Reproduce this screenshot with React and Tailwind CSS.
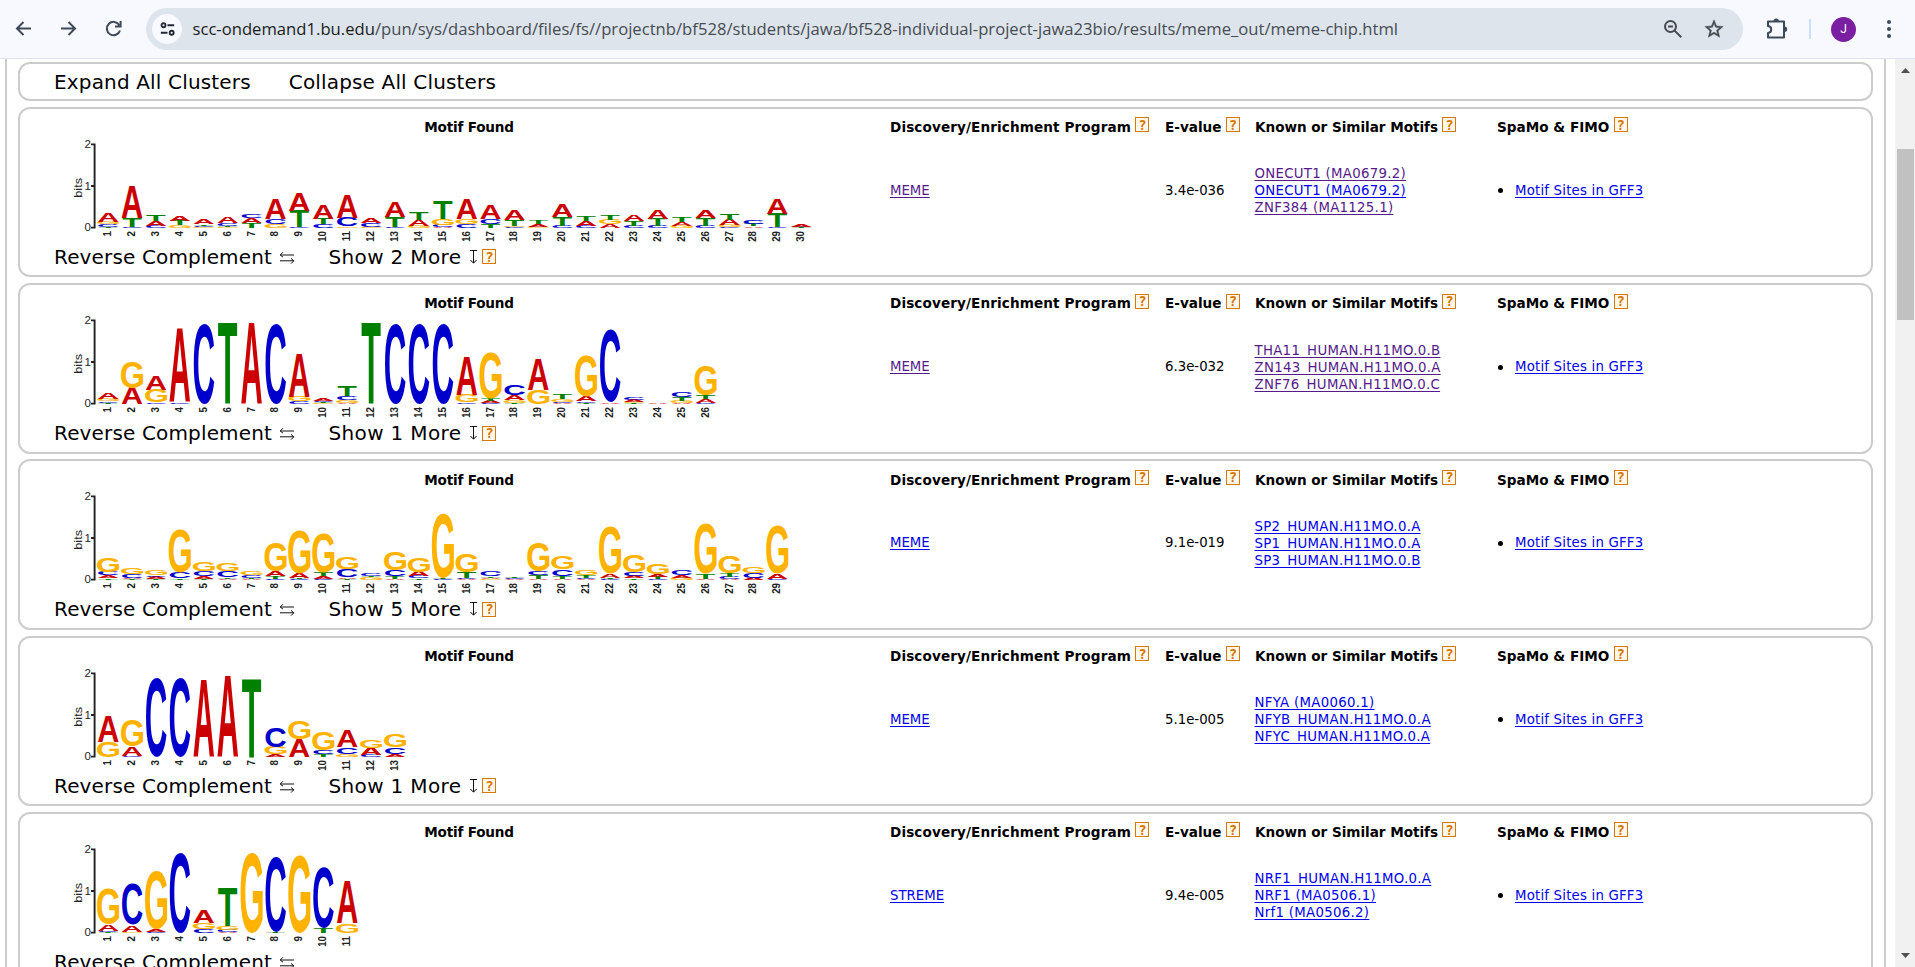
import React from "react";

const VERDANA = "font-['DejaVu_Sans',sans-serif]";

/* Ink box of each capital at font-size 100 and its drawn width in the logo. */
const GLYPHS = {
  A: { x: 0.1, w: 72, top: 68.8, bottom: 0, draw: 22, color: "#cc0000" },
  C: { x: 4.4, w: 64, top: 69.8, bottom: 1, draw: 20, color: "#0000cc" },
  G: { x: 4.2, w: 67.5, top: 69.8, bottom: 1, draw: 22, color: "#ffb300" },
  T: { x: 2.1, w: 57, top: 68.8, bottom: 0, draw: 18.4, color: "#008000" },
};

const BASE = 89.9;
const PITCH = 23.9;

/* Each column lists its letters from top to bottom with heights in thirds of a pixel. */
function Logo({ columns }) {
  const cols = columns.trim().split(/\s+/);
  return (
    <svg width="760" height="109" viewBox="0 0 760 109" className="block shrink-0 overflow-visible">
      <g fill="#222" fontFamily="Liberation Sans, sans-serif" fontSize="11.5">
        <text x="16.8" y="10.2" textAnchor="end">2</text>
        <text x="16.8" y="51.6" textAnchor="end">1</text>
        <text x="16.8" y="93" textAnchor="end">0</text>
        <text transform="translate(8 59.8) rotate(-90)" fontSize="10.5" textLength="20" lengthAdjust="spacingAndGlyphs" y="0">bits</text>
      </g>
      <path d="M17 6.4H21.2M17 48H21.2M17 89.6H21.2M20.6 5.5V90.5" stroke="#222" strokeWidth="1.9" fill="none" />
      {cols.map((col, i) => {
        const cx = 34.2 + i * PITCH;
        const items = col.match(/[ACGT]\d+/g) || [];
        let y = BASE;
        const letters = [...items].reverse().map((it, k) => {
          const g = GLYPHS[it[0]];
          const h = Number(it.slice(1)) / 3;
          const sx = g.draw / g.w;
          const sy = h / (g.top + g.bottom);
          const bottom = y;
          y -= h;
          return (
            <text
              key={k}
              transform={`matrix(${sx} 0 0 ${sy} ${cx - g.draw / 2 - g.x * sx} ${bottom - g.bottom * sy})`}
              fill={g.color}
              fontFamily="Liberation Sans, sans-serif"
              fontWeight="700"
              fontSize="100"
            >
              {it[0]}
            </text>
          );
        });
        return (
          <g key={i}>
            {letters}
            <text
              transform={`translate(${cx + 2.9} 93) rotate(-90) scale(0.9 1)`}
              textAnchor="end"
              fontFamily="Liberation Sans, sans-serif"
              fontWeight="700"
              fontSize="10.8"
              fill="#222"
            >
              {i + 1}
            </text>
          </g>
        );
      })}
    </svg>
  );
}

function Help() {
  return (
    <span className="inline-flex h-[15px] w-[14px] shrink-0 items-center justify-center border border-[#d97700] bg-[#fff8ee] font-['DejaVu_Sans_Mono',monospace] text-[14px] leading-none font-bold text-[#d97700]">
      ?
    </span>
  );
}

function Head({ children, className = "" }) {
  return (
    <div className={`flex h-[29px] items-center gap-[4.5px] pt-[8px] text-[13.6px] font-bold whitespace-nowrap ${className}`}>
      <span>{children}</span>
      <span className="-mt-[5px] flex tracking-normal"><Help /></span>
    </div>
  );
}

function SwapIcon() {
  return (
    <svg width="16" height="14" viewBox="0 0 16 14" className="mt-[2px] ml-[6.5px]" fill="none" stroke="#111" strokeWidth="1">
      <path d="M15 4H1.2M4 1.2L1.2 4L4 6.2M1 9.8H14.8M12 7.4L14.8 9.8L12 12.6" />
    </svg>
  );
}

function DownBarIcon() {
  return (
    <svg width="9" height="16" viewBox="0 0 9 16" className="mr-[4px] ml-[8px]" fill="none" stroke="#111" strokeWidth="1">
      <path d="M1 1.5H8M4.5 1.5V14M1.5 11L4.5 14.2L7.5 11" />
    </svg>
  );
}

const CLUSTERS = [
  {
    program: "MEME", seen: true, evalue: "3.4e-036", more: 2,
    motifs: [["ONECUT1 (MA0679.2)", true], ["ONECUT1 (MA0679.2)", false], ["ZNF384 (MA1125.1)", true]],
    logo: "A27G7C7T4 A95T27C4 T18A13C7 A16T13G8 A14T4C5G2 A20C9T4G3 C12A15T14 A59C16G12 A52T48C2 A40T17C11 A70C26G5 A14C12G4 A44T31C3 T24A18G7 T52G18C6A3 A62G14C12 A43C16T12 A31T18G4C3 T10A9G4 A36T25C7 T16A15C7 T16G14A11 A20T15C6 A28T21C7 T14A11G6 A24T22C7 T17A17G6C2 C11T8A5 A45T40C3 A7C2T2",
  },
  {
    program: "MEME", seen: true, evalue: "6.3e-032", more: 1,
    motifs: [["THA11_HUMAN.H11MO.0.B", true], ["ZN143_HUMAN.H11MO.0.A", true], ["ZNF76_HUMAN.H11MO.0.C", true]],
    logo: "A18G7C5T3 G77A48 A42G38C5 A217C5 C241 T241 A241 C241 A131G15C7 A8C3T3G3 T32C11G9A3 T241 C241 C241 C241 A116G24C4 G136T8A6C3 C31A15G8T3 A91G41 T16G8C3A4 G123A13C4T4 C216A5 C9A6G3T2 A2 C15T12G6A3 G90T12A10C4",
  },
  {
    program: "MEME", seen: false, evalue: "9.1e-019", more: 5,
    motifs: [["SP2_HUMAN.H11MO.0.A", false], ["SP1_HUMAN.H11MO.0.A", false], ["SP3_HUMAN.H11MO.0.B", false]],
    logo: "G43C10A9T5 G18C10A4T2 G15C5A6T4 G129C18T4 G29C15A8T4 G22C18T4A3 G11C8T3A3 G87A14T9C2 G128A13T4C3 G118T11A8C3 G34C25A5T3 C9T5G8 G55C18T9A3 G41A13C6T5 G192T4C3 G53T18C3A3 C14T5A3G3 T5C3A3 G86C12T11A3 G38C21T7A3 G15T7C3A3 G142A11T4C3 G50C12A7T5 G30A8T6C4 C14A9G6 G150T14A4 G51T10C6A3 G19C14A6 G144A14C4",
  },
  {
    program: "MEME", seen: false, evalue: "5.1e-005", more: 1,
    motifs: [["NFYA (MA0060.1)", false], ["NFYB_HUMAN.H11MO.0.A", false], ["NFYC_HUMAN.H11MO.0.A", false]],
    logo: "A75G46 G79A27C4 C235 C235 A229 A241 T235 C60G22A8 G56A52 G54C12T9 A51C20G9 G22A21C6 G37C20A9",
  },
  {
    program: "STREME", seen: false, evalue: "9.4e-005", more: 0,
    motifs: [["NRF1_HUMAN.H11MO.0.A", false], ["NRF1 (MA0506.1)", false], ["Nrf1 (MA0506.2)", false]],
    logo: "G105A19C3T2 C123A20G4 G175A9C4 C241 A36G19C12 T116G10C6A4 G241 C223T3 G233 C183T14 A126G29",
  },
];

function Link({ seen, children }) {
  return (
    <a className={`underline underline-offset-[1.5px] ${seen ? "text-[#551a8b]" : "text-[#0000ee]"}`}>{children}</a>
  );
}

function Cluster({ c }) {
  return (
    <section className="grid h-[170.5px] shrink-0 grid-cols-[870px_275px_90px_242px_1fr] rounded-[12px] border-2 border-[#cccccc]">
      <div className="flex min-w-0 flex-col pl-[34px]">
        <div className="flex h-[29px] items-center justify-center pt-[8px] pr-[6px] text-[13.6px] font-bold tracking-[-0.2px]">
          Motif Found
        </div>
        <div className="pl-[20px]">
          <Logo columns={c.logo} />
        </div>
        <div className="-mt-[2px] flex h-[24px] items-center text-[20px] tracking-[0.15px] whitespace-nowrap">
          <span>Reverse Complement</span>
          <SwapIcon />
          {c.more > 0 && (
            <>
              <span className="ml-[34px] tracking-[0.35px]">Show {c.more} More</span>
              <DownBarIcon />
              <span className="flex tracking-normal"><Help /></span>
            </>
          )}
        </div>
      </div>
      <div>
        <Head className="tracking-[0.1px]">Discovery/Enrichment Program</Head>
        <div className="flex h-[106px] items-center text-[13.3px]"><Link seen={c.seen}>{c.program}</Link></div>
      </div>
      <div>
        <Head>E-value</Head>
        <div className="flex h-[106px] items-center text-[13.3px]">{c.evalue}</div>
      </div>
      <div>
        <Head className="tracking-[-0.04px]">Known or Similar Motifs</Head>
        <div className="-ml-[0.5px] flex h-[106px] flex-col justify-center text-[13.3px] leading-[17px] tracking-[0.3px]">
          {c.motifs.map(([name, seen], i) => (
            <div key={i}><Link seen={seen}>{name}</Link></div>
          ))}
        </div>
      </div>
      <div>
        <Head>SpaMo &amp; FIMO</Head>
        <div className="flex h-[106px] items-center text-[13.3px] tracking-[0.2px]">
          <span className="mr-[12px] ml-[1px] h-[5px] w-[5px] rounded-full bg-black" />
          <Link>Motif Sites in GFF3</Link>
        </div>
      </div>
    </section>
  );
}

function Toolbar() {
  return (
    <header className="flex h-[59px] shrink-0 items-center border-b border-[#dfe1ec] bg-[#f8f9ff] text-[#3c4a59]">
      <svg width="146" height="58" viewBox="0 0 146 58" fill="none" stroke="#3c4a59" strokeWidth="2">
        <path d="M31 28.5H17M23.5 22L17 28.5L23.5 35" />
        <path d="M61 28.5H75M68.5 22L75 28.5L68.5 35" />
        <path d="M119.4 25.2A6.7 6.7 0 1 0 120 30.5M120.6 21V26.4H115" />
      </svg>
      <div className="flex h-[42px] w-[1597px] items-center rounded-full bg-[#dde4ec] pr-[18px] pl-[6px]">
        <span className="flex h-[30px] w-[30px] shrink-0 items-center justify-center rounded-full bg-[#f8f9ff]">
          <svg width="15" height="16" viewBox="0 0 18 18" fill="none" stroke="#1f2a33" strokeWidth="2.2">
            <circle cx="4.2" cy="4.5" r="2.4" /><path d="M9 4.5H17M1 13.5H9" /><circle cx="14" cy="13.5" r="2.4" />
          </svg>
        </span>
        <span className="mt-[1px] ml-[10.5px] flex-1 font-['Open_Sans',sans-serif] text-[16.65px] whitespace-nowrap text-[#474c52]">
          <span className="text-[#1b1d21]">scc-ondemand1.bu.edu</span>/pun/sys/dashboard/files/fs//projectnb/bf528/students/jawa/bf528-individual-project-jawa23bio/results/meme_out/meme-chip.html
        </span>
        <svg width="20" height="20" viewBox="0 0 20 20" fill="none" stroke="#474b50" strokeWidth="2">
          <circle cx="7.5" cy="7.5" r="5.5" /><path d="M11.6 11.6L18.3 18.3M5 7.5H10" />
        </svg>
        <svg width="22" height="22" viewBox="0 0 24 24" className="ml-[20px]" fill="#474b50">
          <path stroke="#474b50" strokeWidth="0.5" d="M22 9.24l-7.19-.62L12 2 9.19 8.63 2 9.24l5.46 4.73L5.82 21 12 17.27 18.18 21l-1.63-7.03L22 9.24zM12 15.4l-3.76 2.27 1-4.28-3.32-2.88 4.38-.38L12 6.1l1.71 4.04 4.38.38-3.32 2.88 1 4.28L12 15.4z" />
        </svg>
      </div>
      <svg width="24" height="24" viewBox="0 0 24 24" className="-mt-[2px] ml-[22px]" fill="none" stroke="#3c4a59" strokeWidth="2" strokeLinejoin="round">
        <path d="M3 5.5H19V21.5H3V17C7.3 16.5 7.3 10.5 3 10Z" />
        <path d="M8.6 5A2.6 2.6 0 0 1 13.8 5ZM19.5 10.6A2.7 2.7 0 0 1 19.5 16Z" fill="#3c4a59" stroke="none" />
      </svg>
      <span className="ml-[20px] h-[20px] w-[2px] bg-[#c7e0fb]" />
      <span className="ml-[20px] flex h-[25px] w-[25px] items-center justify-center rounded-full bg-[#7b1fa2] font-['Roboto',sans-serif] text-[12px] text-white">J</span>
      <svg width="6" height="20" viewBox="0 0 6 20" className="ml-[29.5px]" fill="#3c4a59">
        <circle cx="3" cy="3" r="2" /><circle cx="3" cy="10" r="2" /><circle cx="3" cy="17" r="2" />
      </svg>
    </header>
  );
}

export default function App() {
  return (
    <div className={`flex h-[967px] w-[1915px] flex-col overflow-hidden bg-white text-black ${VERDANA}`}>
      <Toolbar />
      <div className="flex min-h-0 flex-1">
        <main className="ml-[5px] flex w-[1881px] shrink-0 flex-col gap-[5.75px] overflow-hidden border-x-2 border-[#cccccc] px-[11px] pt-[3px]">
          <div className="flex h-[39px] shrink-0 items-center gap-[38px] rounded-[12px] border-2 border-[#cccccc] pl-[34px] text-[20px] tracking-[0.16px] whitespace-nowrap">
            <span>Expand All Clusters</span>
            <span>Collapse All Clusters</span>
          </div>
          {CLUSTERS.map((c, i) => (
            <Cluster key={i} c={c} />
          ))}
        </main>
        <div className="ml-auto flex w-[20px] flex-col items-center justify-between bg-[#f1f1f1]">
          <svg width="20" height="20" viewBox="0 0 20 20" fill="#505050"><path d="M6 14L10.5 9L15 14Z" /></svg>
          <div className="mt-[70px] mb-auto h-[171px] w-[17px] bg-[#c1c1c1]" />
          <svg width="20" height="20" viewBox="0 0 20 20" fill="#505050"><path d="M6 6L10.5 11L15 6Z" /></svg>
        </div>
      </div>
    </div>
  );
}
